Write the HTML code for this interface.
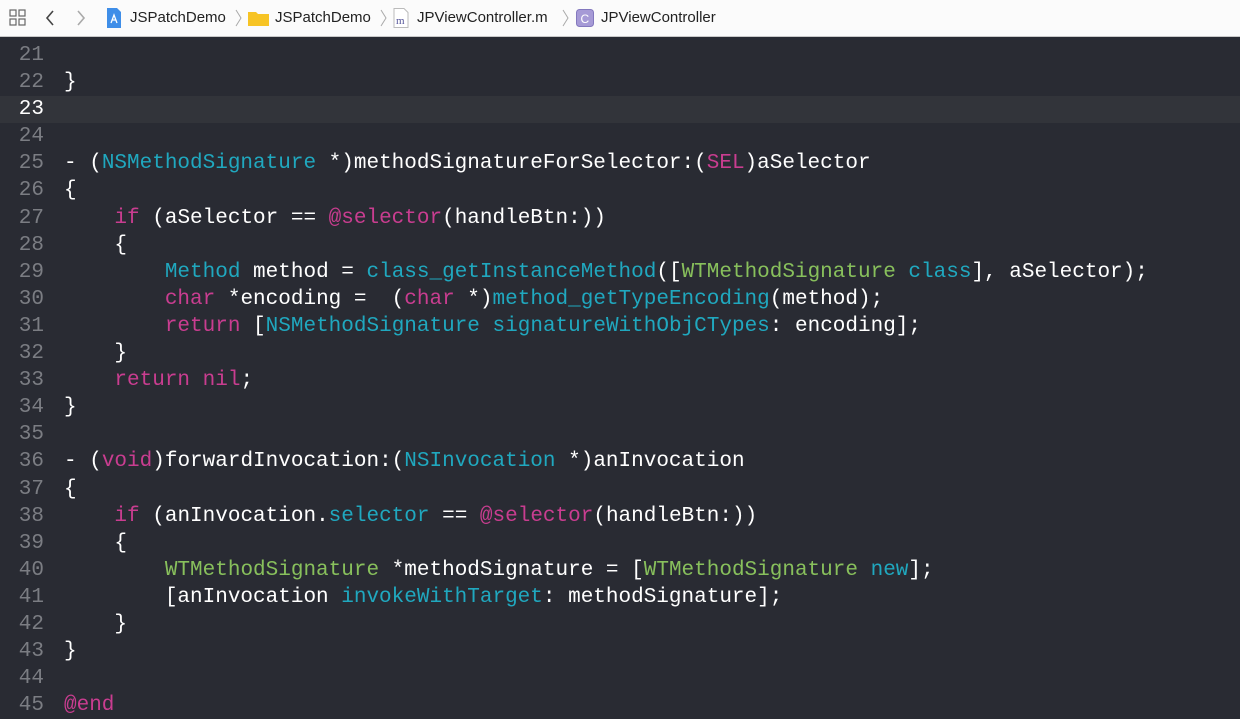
<!DOCTYPE html>
<html><head><meta charset="utf-8"><style>
body{margin:0;width:1240px;height:701px;overflow:hidden;background:#292b33;font-family:"Liberation Sans",sans-serif}
.top{position:absolute;left:0;top:0;width:1240px;height:36px;background:#fbfbfb;border-bottom:1px solid #c9c9c9;z-index:2}
.top span{position:absolute;top:9px;font-size:15px;color:#222}
.code{position:absolute;left:0;top:42px;width:1240px;font-family:"Liberation Mono",monospace;font-size:21px;color:#fff}
.l{height:27.1px;line-height:27.1px;white-space:pre;position:relative}
.n{display:inline-block;width:44px;text-align:right;color:#7b7d83;margin-right:20px}
.cur{background:#32343a}.cur .n{color:#fff}
.k{color:#c93d90}.c{color:#20a8bf}.g{color:#88c05c}
</style></head><body>
<div class="top">
<svg style="position:absolute;left:9px;top:9px" width="18" height="18" viewBox="0 0 18 18" fill="none" stroke="#666" stroke-width="1.2"><rect x="1" y="1" width="6" height="6"/><rect x="10" y="1" width="6" height="6"/><rect x="1" y="10" width="6" height="6"/><rect x="10" y="10" width="6" height="6"/></svg>
<svg style="position:absolute;left:45px;top:10px" width="10" height="16"><path d="M8 1L2 8l6 7" stroke="#444" stroke-width="1.6" fill="none"/></svg>
<svg style="position:absolute;left:76px;top:10px" width="10" height="16"><path d="M2 1l6 7-6 7" stroke="#aaa" stroke-width="1.6" fill="none"/></svg>
<svg style="position:absolute;left:106px;top:8px" width="16" height="20"><path d="M1 0h10l4 4v16H1z" fill="#3f8ee8"/><path d="M5 15l3-8 3 8M6 12h4" stroke="#fff" stroke-width="1.3" fill="none"/></svg>
<span style="left:130px">JSPatchDemo</span>
<svg style="position:absolute;left:235px;top:9px" width="8" height="18"><path d="M1 1l5 8-5 8" stroke="#aaa" fill="none"/></svg>
<svg style="position:absolute;left:248px;top:10px" width="21" height="16"><path d="M0 2h8l2 2h11v12H0z" fill="#f7c425"/></svg>
<span style="left:275px">JSPatchDemo</span>
<svg style="position:absolute;left:380px;top:9px" width="8" height="18"><path d="M1 1l5 8-5 8" stroke="#aaa" fill="none"/></svg>
<svg style="position:absolute;left:393px;top:8px" width="16" height="20"><path d="M1 .5h10l4 4v15H1z" fill="#fff" stroke="#bbb"/><text x="3" y="16" font-size="11" font-family="Liberation Serif" fill="#559">m</text></svg>
<span style="left:417px">JPViewController.m</span>
<svg style="position:absolute;left:562px;top:9px" width="8" height="18"><path d="M1 1l5 8-5 8" stroke="#aaa" fill="none"/></svg>
<svg style="position:absolute;left:576px;top:9px" width="18" height="18"><rect x=".5" y=".5" width="17" height="17" rx="3" fill="#a69ad6" stroke="#8378be"/><text x="4.5" y="14" font-size="12" fill="#fff">C</text></svg>
<span style="left:601px">JPViewController</span>
</div>
<div class="code">
<div class="l"><span class="n">21</span></div>
<div class="l"><span class="n">22</span>}</div>
<div class="l cur"><span class="n">23</span></div>
<div class="l"><span class="n">24</span></div>
<div class="l"><span class="n">25</span>- (<span class="c">NSMethodSignature</span> *)methodSignatureForSelector:(<span class="k">SEL</span>)aSelector</div>
<div class="l"><span class="n">26</span>{</div>
<div class="l"><span class="n">27</span>    <span class="k">if</span> (aSelector == <span class="k">@selector</span>(handleBtn:))</div>
<div class="l"><span class="n">28</span>    {</div>
<div class="l"><span class="n">29</span>        <span class="c">Method</span> method = <span class="c">class_getInstanceMethod</span>([<span class="g">WTMethodSignature</span> <span class="c">class</span>], aSelector);</div>
<div class="l"><span class="n">30</span>        <span class="k">char</span> *encoding =  (<span class="k">char</span> *)<span class="c">method_getTypeEncoding</span>(method);</div>
<div class="l"><span class="n">31</span>        <span class="k">return</span> [<span class="c">NSMethodSignature</span> <span class="c">signatureWithObjCTypes</span>: encoding];</div>
<div class="l"><span class="n">32</span>    }</div>
<div class="l"><span class="n">33</span>    <span class="k">return</span> <span class="k">nil</span>;</div>
<div class="l"><span class="n">34</span>}</div>
<div class="l"><span class="n">35</span></div>
<div class="l"><span class="n">36</span>- (<span class="k">void</span>)forwardInvocation:(<span class="c">NSInvocation</span> *)anInvocation</div>
<div class="l"><span class="n">37</span>{</div>
<div class="l"><span class="n">38</span>    <span class="k">if</span> (anInvocation.<span class="c">selector</span> == <span class="k">@selector</span>(handleBtn:))</div>
<div class="l"><span class="n">39</span>    {</div>
<div class="l"><span class="n">40</span>        <span class="g">WTMethodSignature</span> *methodSignature = [<span class="g">WTMethodSignature</span> <span class="c">new</span>];</div>
<div class="l"><span class="n">41</span>        [anInvocation <span class="c">invokeWithTarget</span>: methodSignature];</div>
<div class="l"><span class="n">42</span>    }</div>
<div class="l"><span class="n">43</span>}</div>
<div class="l"><span class="n">44</span></div>
<div class="l"><span class="n">45</span><span class="k">@end</span></div>
</div>
</body></html>
